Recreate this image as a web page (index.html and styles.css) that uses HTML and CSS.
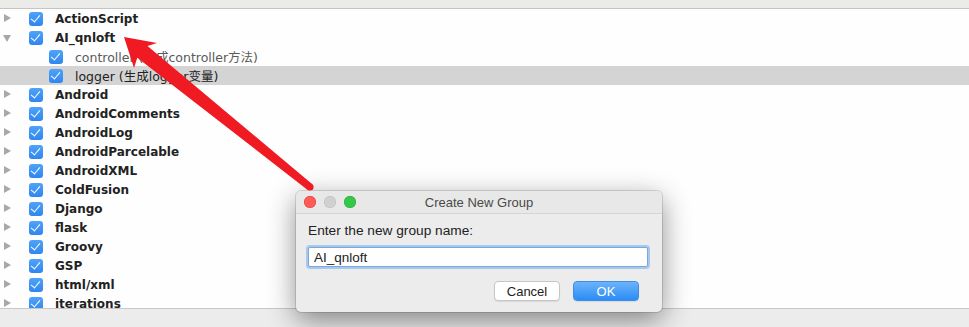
FILE: index.html
```html
<!DOCTYPE html>
<html lang="en">
<head>
  <meta charset="UTF-8" />
  <title>Live Templates</title>
  <link rel="stylesheet" href="styles.css">
</head>
<body>
  <div class="top-bar"></div>

  <ul class="tree">
    <li class="row"><span class="toggle"></span><span class="check"></span><span class="label">ActionScript</span></li>
    <li class="row"><span class="toggle open"></span><span class="check"></span><span class="label">AI_qnloft</span></li>
    <li class="row child"><span class="check"></span><span class="label muted">controller (生成controller方法)</span></li>
    <li class="row child selected"><span class="check"></span><span class="label">logger (生成logger变量)</span></li>
    <li class="row"><span class="toggle"></span><span class="check"></span><span class="label">Android</span></li>
    <li class="row"><span class="toggle"></span><span class="check"></span><span class="label">AndroidComments</span></li>
    <li class="row"><span class="toggle"></span><span class="check"></span><span class="label">AndroidLog</span></li>
    <li class="row"><span class="toggle"></span><span class="check"></span><span class="label">AndroidParcelable</span></li>
    <li class="row"><span class="toggle"></span><span class="check"></span><span class="label">AndroidXML</span></li>
    <li class="row"><span class="toggle"></span><span class="check"></span><span class="label">ColdFusion</span></li>
    <li class="row"><span class="toggle"></span><span class="check"></span><span class="label">Django</span></li>
    <li class="row"><span class="toggle"></span><span class="check"></span><span class="label">flask</span></li>
    <li class="row"><span class="toggle"></span><span class="check"></span><span class="label">Groovy</span></li>
    <li class="row"><span class="toggle"></span><span class="check"></span><span class="label">GSP</span></li>
    <li class="row"><span class="toggle"></span><span class="check"></span><span class="label">html/xml</span></li>
    <li class="row"><span class="toggle"></span><span class="check"></span><span class="label">iterations</span></li>
  </ul>

  <div class="bottom-bar"></div>

  <div class="dialog">
    <div class="dialog-title">
      <div class="lights">
        <span class="light red"></span>
        <span class="light gray"></span>
        <span class="light green"></span>
      </div>
      <span class="title-text">Create New Group</span>
    </div>
    <div class="dialog-body">
      <label class="prompt">Enter the new group name:</label>
      <input class="name-input" type="text" value="AI_qnloft" />
      <div class="buttons">
        <button class="btn">Cancel</button>
        <button class="btn primary">OK</button>
      </div>
    </div>
  </div>

  <!-- annotation arrow drawn over the screenshot -->
  <svg class="arrow" width="969" height="327" viewBox="0 0 969 327">
    <polygon points="124,37 157,43 147.5,46 312.3,184.2 307.7,189.9 137.3,57.8 134,68" />
    <circle cx="310" cy="187" r="3.6" />
  </svg>
</body>
</html>
```

FILE: styles.css
```css
body {
  margin: 0;
  width: 969px;
  height: 327px;
  overflow: hidden;
  background: #fdfefd;
  font-family: 'DejaVu Sans', 'Noto Sans CJK SC', sans-serif;
  color: #222;
  position: relative;
}

.top-bar {
  height: 8px;
  background: #ebecea;
  border-bottom: 1px solid #c4c4c4;
}

.tree {
  list-style: none;
  margin: 0;
  padding: 0;
  height: 299px;
  overflow: hidden;
}

.row {
  display: flex;
  align-items: center;
  height: 19px;
}

.row.selected {
  background: #d4d4d4;
}

.toggle {
  width: 29px;
  height: 19px;
  position: relative;
  flex-shrink: 0;
}

.toggle::before {
  content: '';
  position: absolute;
  left: 4px;
  top: 5px;
  border-style: solid;
  border-width: 4.5px 0 4.5px 7px;
  border-color: transparent transparent transparent #a8a8a8;
}

.toggle.open::before {
  left: 3px;
  top: 7px;
  border-width: 7px 4.5px 0 4.5px;
  border-color: #a8a8a8 transparent transparent transparent;
}

.row.child {
  padding-left: 49px;
}

.check {
  width: 14px;
  height: 14px;
  border-radius: 3px;
  background: linear-gradient(#4fa3fa, #2f86ee);
  position: relative;
  flex-shrink: 0;
  margin-right: 12px;
}

.check::after {
  content: '';
  position: absolute;
  left: 4px;
  top: 1px;
  width: 4px;
  height: 8px;
  border: solid #fff;
  border-width: 0 1.6px 1.6px 0;
  transform: rotate(40deg);
}

.label {
  font-size: 12px;
  font-weight: bold;
  white-space: nowrap;
}

.row.child .label {
  font-weight: normal;
  font-size: 12.5px;
  color: #222;
}

.row.child .label.muted {
  color: #5a5a5a;
}

.bottom-bar {
  height: 18px;
  background: #ececec;
  border-top: 1px solid #c8c8c8;
}

.dialog {
  position: absolute;
  left: 296px;
  top: 191px;
  width: 366px;
  height: 121px;
  background: #ececec;
  border-radius: 5px;
  box-shadow: 0 8px 28px rgba(0, 0, 0, 0.45), 0 0 0 1px rgba(0, 0, 0, 0.12);
  font-family: 'Liberation Sans', 'Noto Sans', sans-serif;
}

.dialog-title {
  height: 22px;
  display: flex;
  align-items: center;
  justify-content: center;
  position: relative;
  background: #e8e8e8;
  border-bottom: 1px solid #d6d6d6;
  border-radius: 5px 5px 0 0;
}

.lights {
  position: absolute;
  left: 8px;
  top: 5px;
  display: flex;
  gap: 8px;
}

.light {
  width: 12px;
  height: 12px;
  border-radius: 50%;
}

.light.red {
  background: #fc5b57;
  box-shadow: inset 0 0 0 0.5px #df3f3b;
}

.light.gray {
  background: #d0d0d0;
  box-shadow: inset 0 0 0 0.5px #bdbdbd;
}

.light.green {
  background: #34c84a;
  box-shadow: inset 0 0 0 0.5px #24a735;
}

.title-text {
  font-size: 13px;
  color: #4a4a4a;
}

.dialog-body {
  padding: 9px 12px 0 12px;
  display: flex;
  flex-direction: column;
}

.prompt {
  font-size: 13.7px;
  color: #222;
  height: 16px;
}

.name-input {
  margin-top: 8px;
  width: 340px;
  height: 20px;
  box-sizing: border-box;
  border: 1px solid #7aa7de;
  border-radius: 2px;
  box-shadow: 0 0 0 2px #a9c8ee;
  padding: 0 5px;
  font-family: 'Liberation Sans', 'Noto Sans', sans-serif;
  font-size: 13.5px;
  color: #222;
  background: #fff;
  outline: none;
}

.buttons {
  display: flex;
  justify-content: flex-end;
  gap: 13px;
  margin-top: 14px;
  padding-right: 11px;
}

.btn {
  width: 66px;
  height: 20px;
  border: 1px solid #c6c6c6;
  border-radius: 4px;
  background: #fff;
  font-family: 'Liberation Sans', 'Noto Sans', sans-serif;
  font-size: 13px;
  color: #222;
  padding: 0;
  box-shadow: 0 1px 1px rgba(0, 0, 0, 0.08);
}

.btn.primary {
  background: linear-gradient(#6cb3fa, #2b8cf6);
  border-color: #3e8ee8;
  color: #fff;
}

.arrow {
  position: absolute;
  left: 0;
  top: 0;
  pointer-events: none;
}

.arrow polygon,
.arrow circle {
  fill: #ef1a22;
}
```
